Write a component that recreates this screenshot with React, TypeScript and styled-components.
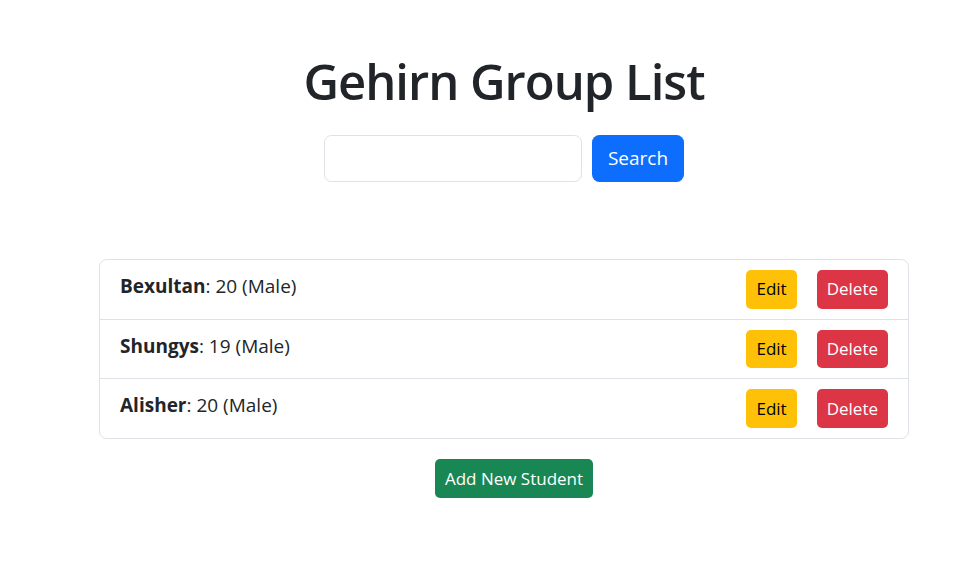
import React from "react";
import styled, { createGlobalStyle } from "styled-components";

const Global = createGlobalStyle`
  html, body { margin: 0; padding: 0; background: #fff; }
  body {
    font-family: "Open Sans", "Noto Sans", sans-serif;
    color: #212529;
    font-size: 19px;
    line-height: 1.5;
  }
  * { box-sizing: border-box; }
`;

const Page = styled.div`
  padding: 52px 60px 40px 99px;
  display: flex;
  flex-direction: column;
`;

const Title = styled.h1`
  margin: 0 0 24px;
  text-align: center;
  font-size: 49px;
  font-weight: 600;
  letter-spacing: -1px;
  line-height: 1.2;
  color: #212529;
`;

const SearchForm = styled.form`
  display: flex;
  justify-content: center;
  gap: 10px;
  margin: 0 0 77px;
`;

const Input = styled.input`
  width: 258px;
  height: 47px;
  border: 1px solid #dee2e6;
  border-radius: 7.5px;
  padding: 7px 15px;
  font: inherit;
`;

const Button = styled.button<{ $variant: "primary" | "warning" | "danger" | "success"; $size?: "sm" }>`
  font-family: inherit;
  border: 1px solid transparent;
  cursor: pointer;
  line-height: 1.5;
  font-size: ${(p) => (p.$size === "sm" ? "17px" : "19px")};
  padding: ${(p) => (p.$size === "sm" ? "4px 9px" : "7.5px 15px")};
  height: ${(p) => (p.$size === "sm" ? "38.75px" : "47px")};
  border-radius: ${(p) => (p.$size === "sm" ? "5px" : "7.5px")};
  background: ${(p) =>
    ({ primary: "#0d6efd", warning: "#ffc107", danger: "#dc3545", success: "#198754" }[p.$variant])};
  color: ${(p) => (p.$variant === "warning" ? "#000" : "#fff")};
  display: inline-flex;
  align-items: center;
  justify-content: center;
`;

const List = styled.ul`
  list-style: none;
  margin: 0;
  padding: 0;
  border: 1px solid #dee2e6;
  border-radius: 7.5px;
`;

const Item = styled.li`
  display: flex;
  justify-content: space-between;
  align-items: flex-start;
  padding: 10px 20px;
  & + & { border-top: 1px solid #dee2e6; }
`;

const Info = styled.span`
  font-size: 19px;
  line-height: 32px;
`;

const Actions = styled.div`
  display: flex;
  gap: 20px;
`;

const Footer = styled.div`
  display: flex;
  justify-content: center;
  padding-left: 20px;
  margin-top: 20px;
`;

const students = [
  { name: "Bexultan", age: 20, gender: "Male" },
  { name: "Shungys", age: 19, gender: "Male" },
  { name: "Alisher", age: 20, gender: "Male" },
];

export default function App() {
  return (
    <>
      <Global />
      <Page>
        <Title>Gehirn Group List</Title>
        <SearchForm onSubmit={(e) => e.preventDefault()}>
          <Input type="text" />
          <Button $variant="primary" type="submit">Search</Button>
        </SearchForm>
        <List>
          {students.map((s) => (
            <Item key={s.name}>
              <Info>
                <strong>{s.name}</strong>: {s.age} ({s.gender})
              </Info>
              <Actions>
                <Button $variant="warning" $size="sm">Edit</Button>
                <Button $variant="danger" $size="sm">Delete</Button>
              </Actions>
            </Item>
          ))}
        </List>
        <Footer>
          <Button $variant="success" $size="sm">Add New Student</Button>
        </Footer>
      </Page>
    </>
  );
}
